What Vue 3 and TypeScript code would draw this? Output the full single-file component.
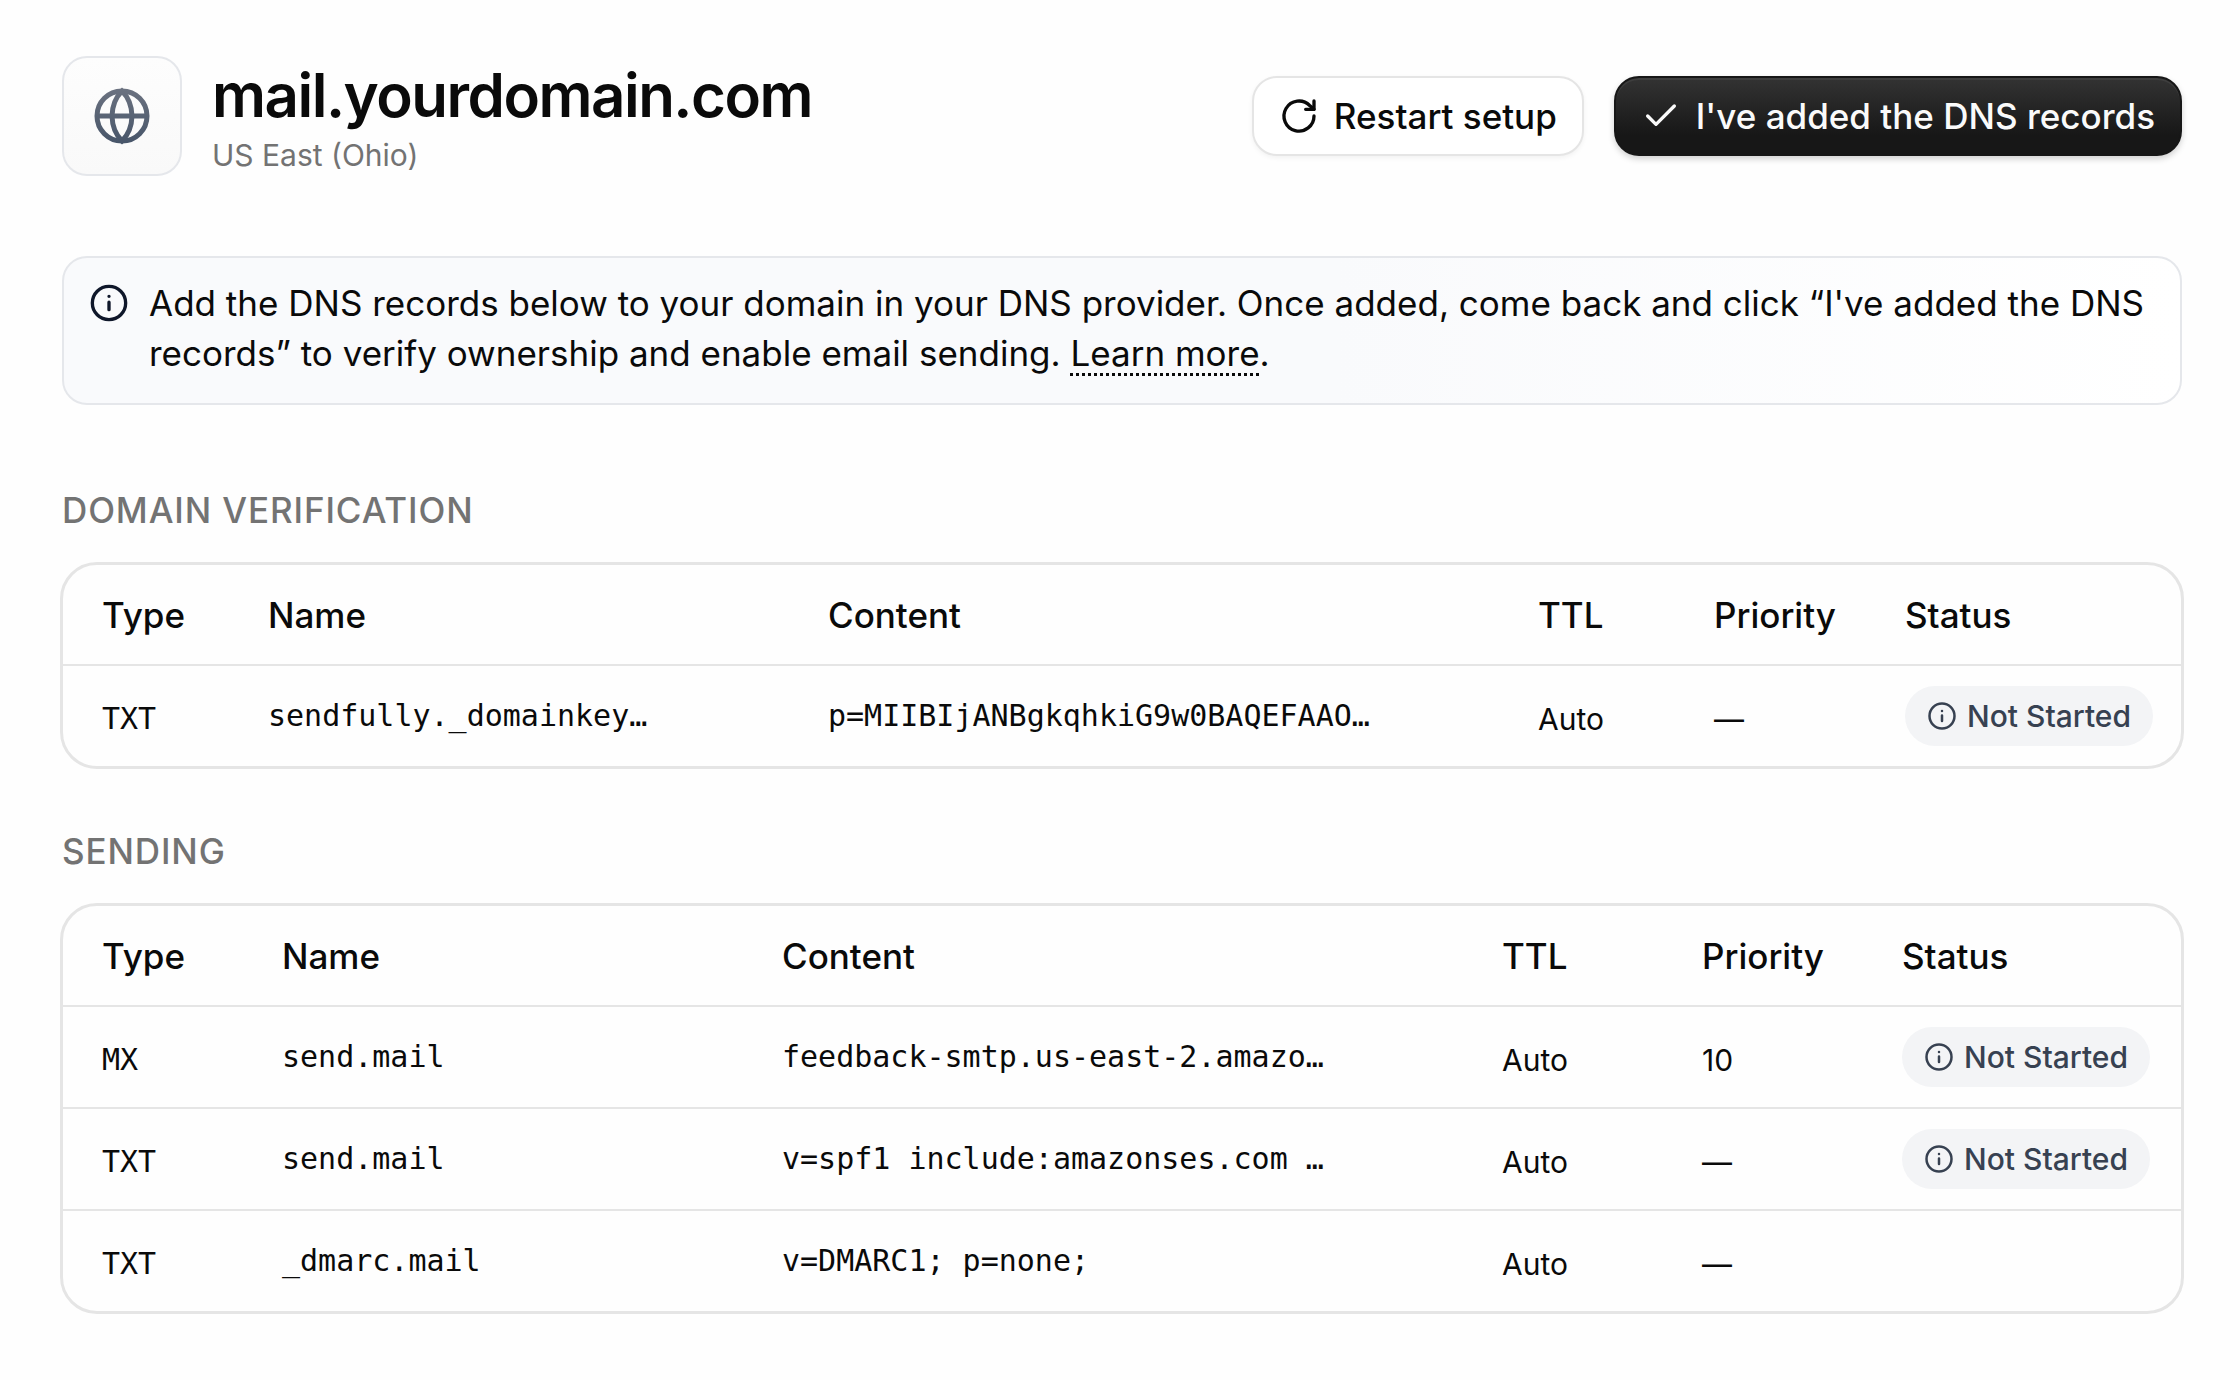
<script setup lang="ts">
interface DnsRecord {
  type: string
  name: string
  content: string
  ttl: string
  priority: string
  status: string
}

interface Section {
  title: string
  layout: string
  records: DnsRecord[]
}

const columns = ['Type', 'Name', 'Content', 'TTL', 'Priority', 'Status']

const sections: Section[] = [
  {
    title: 'DOMAIN VERIFICATION',
    layout: 'verification',
    records: [
      { type: 'TXT', name: 'sendfully._domainkey…', content: 'p=MIIBIjANBgkqhkiG9w0BAQEFAAO…', ttl: 'Auto', priority: '—', status: 'Not Started' },
    ],
  },
  {
    title: 'SENDING',
    layout: 'sending',
    records: [
      { type: 'MX', name: 'send.mail', content: 'feedback-smtp.us-east-2.amazo…', ttl: 'Auto', priority: '10', status: 'Not Started' },
      { type: 'TXT', name: 'send.mail', content: 'v=spf1 include:amazonses.com …', ttl: 'Auto', priority: '—', status: 'Not Started' },
      { type: 'TXT', name: '_dmarc.mail', content: 'v=DMARC1; p=none;', ttl: 'Auto', priority: '—', status: '' },
    ],
  },
]
</script>

<template>
  <main class="page">
    <header class="header">
      <div class="tile">
        <svg class="globe" viewBox="0 0 24 24" fill="none" stroke="url(#globe-ink)" stroke-width="2" aria-hidden="true">
          <defs>
            <linearGradient id="globe-ink" gradientUnits="userSpaceOnUse" x1="0" y1="1" x2="0" y2="23">
              <stop offset="0" stop-color="#6b7280" />
              <stop offset="1" stop-color="#475569" />
            </linearGradient>
          </defs>
          <circle cx="12" cy="12" r="10" />
          <path d="M2 12h20.001" />
          <path d="M12 2c2.5 2.500 3.900 6 4 10-.1 4-1.500 7.500-4 10-2.500-2.500-3.900-6-4-10 .1-4 1.500-7.500 4-10z" />
        </svg>
      </div>
      <div class="identity">
        <h1>mail.yourdomain.com</h1>
        <p>US East (Ohio)</p>
      </div>
      <div class="actions">
        <button type="button" class="btn btn-light">
          <svg class="btn-icon" viewBox="0 0 24 24" fill="none" stroke="currentColor" stroke-width="2" stroke-linecap="round" stroke-linejoin="round" aria-hidden="true">
            <path d="M21 12a9 9 0 1 1-2.600-6.300L21 8" />
            <path d="M21 3v5h-5" />
          </svg>
          Restart setup
        </button>
        <button type="button" class="btn btn-dark">
          <svg class="btn-icon" viewBox="0 0 24 24" fill="none" stroke="currentColor" stroke-width="2" stroke-linecap="round" stroke-linejoin="round" aria-hidden="true">
            <path d="M20 6 9 17l-5-5" />
          </svg>
          I've added the DNS records
        </button>
      </div>
    </header>

    <section class="notice">
      <svg class="notice-icon" viewBox="0 0 24 24" fill="none" stroke="currentColor" stroke-width="2" stroke-linecap="round" aria-hidden="true">
        <circle cx="12" cy="12" r="10" />
        <path d="M12 11.500V16M12 8h.01" />
      </svg>
      <p>
        Add the DNS records below to your domain in your DNS provider. Once added, come back and click “I've added the DNS records” to verify ownership and enable email sending. <a href="#">Learn more</a>.
      </p>
    </section>

    <section v-for="section in sections" :key="section.title" class="group">
      <h2>{{ section.title }}</h2>
      <div class="card">
        <table :class="section.layout">
          <colgroup>
            <col v-for="column in columns" :key="column" :class="'col-' + column.toLowerCase()" />
          </colgroup>
          <thead>
            <tr>
              <th v-for="column in columns" :key="column" scope="col">{{ column }}</th>
            </tr>
          </thead>
          <tbody>
            <tr v-for="(record, i) in section.records" :key="i">
              <td class="mono low">{{ record.type }}</td>
              <td class="mono">{{ record.name }}</td>
              <td class="mono">{{ record.content }}</td>
              <td class="low">{{ record.ttl }}</td>
              <td class="low">{{ record.priority }}</td>
              <td>
                <span v-if="record.status" class="badge">
                  <svg class="badge-icon" viewBox="0 0 24 24" fill="none" stroke="currentColor" stroke-width="2" stroke-linecap="round" aria-hidden="true">
                    <circle cx="12" cy="12" r="10" />
                    <path d="M12 11.500V16M12 8h.01" />
                  </svg>
                  {{ record.status }}
                </span>
              </td>
            </tr>
          </tbody>
        </table>
      </div>
    </section>
  </main>
</template>

<style>
body {
  margin: 0;
  background: #fefefe;
}
</style>

<style scoped>
.page {
  box-sizing: border-box;
  padding: 56px 56px 60px 60px;
  font-family: Inter, "Liberation Sans", sans-serif;
  font-size: 35px;
  line-height: 50px;
  color: #0a0a0a;
}

h1,
h2,
p {
  margin: 0;
}

.header {
  display: flex;
  align-items: center;
  margin: 0 2px;
}

.tile {
  box-sizing: border-box;
  display: flex;
  align-items: center;
  justify-content: center;
  width: 120px;
  height: 120px;
  border: 2px solid #e5e7eb;
  border-radius: 25px;
  background: linear-gradient(#fdfdfd, #f9f9f9);
}

.globe {
  width: 60px;
  height: 60px;
}

.identity {
  flex: 1;
  margin-left: 30px;
}

h1 {
  font-size: 60px;
  line-height: 78px;
  font-weight: 600;
  letter-spacing: -0.025em;
}

.identity p {
  font-size: 30px;
  line-height: 42px;
  color: #737373;
}

.actions {
  display: flex;
  gap: 30px;
}

.btn {
  box-sizing: border-box;
  display: flex;
  align-items: center;
  gap: 15px;
  height: 80px;
  padding: 0 25px;
  border: 2px solid #e5e5e5;
  border-radius: 25px;
  font: inherit;
  font-weight: 500;
  background: #ffffff;
  color: #0a0a0a;
  box-shadow: 0 2px 5px rgba(0, 0, 0, 0.05);
}

.btn-dark {
  border-color: #171717;
  background: linear-gradient(#333333, #171717 75%);
  color: #fafafa;
  box-shadow: 0 3px 6px rgba(0, 0, 0, 0.18), inset 0 2px 0 rgba(255, 255, 255, 0.06);
}

.btn-icon {
  flex: none;
  width: 40px;
  height: 40px;
}

.notice {
  display: flex;
  gap: 20px;
  box-sizing: border-box;
  min-height: 149px;
  margin: 80px 2px 0;
  padding: 20px 30px 20px 25px;
  border: 2px solid #e5e7eb;
  border-radius: 25px;
  background: linear-gradient(to right, #f9fafc, #f9fafc 60%, #ffffff);
}

.notice-icon {
  flex: none;
  width: 40px;
  height: 40px;
  margin-top: 5px;
  color: #0f172a;
}

.notice a {
  color: inherit;
  text-decoration: underline dotted 3px;
  text-underline-offset: 7px;
}

.group {
  margin-top: 80px;
}

.group + .group {
  margin-top: 57px;
}

h2 {
  margin: 0 2px;
  font-size: 35px;
  line-height: 50px;
  font-weight: 500;
  letter-spacing: 0.025em;
  color: #737373;
}

.card {
  margin-top: 27px;
  border: 3px solid #e5e5e5;
  border-radius: 37px;
}

table {
  width: 100%;
  table-layout: fixed;
  border-collapse: separate;
  border-spacing: 0;
}

.col-type {
  width: 166px;
}

.col-name {
  width: 560px;
}

.col-ttl {
  width: 176px;
}

.col-priority {
  width: 191px;
}

.col-status {
  width: 315px;
}

.sending .col-type {
  width: 180px;
}

.sending .col-name {
  width: 500px;
}

.sending .col-ttl {
  width: 200px;
}

.sending .col-priority {
  width: 200px;
}

.sending .col-status {
  width: 318px;
}

th,
td {
  box-sizing: border-box;
  height: 99px;
  padding: 0 0 0 39px;
  text-align: left;
  vertical-align: middle;
  white-space: nowrap;
}

th {
  font-weight: 500;
}

td {
  height: 102px;
  border-top: 2px solid #e5e5e5;
  font-size: 30px;
  line-height: 40px;
}

.low {
  padding-top: 5px;
}

.mono {
  font-family: "DejaVu Sans Mono", monospace;
}

.badge {
  display: inline-flex;
  align-items: center;
  gap: 10px;
  height: 60px;
  padding: 0 22px;
  border-radius: 30px;
  background: #f3f4f6;
  color: #374151;
  font-weight: 500;
  vertical-align: middle;
}

.badge-icon {
  flex: none;
  width: 30px;
  height: 30px;
}
</style>
